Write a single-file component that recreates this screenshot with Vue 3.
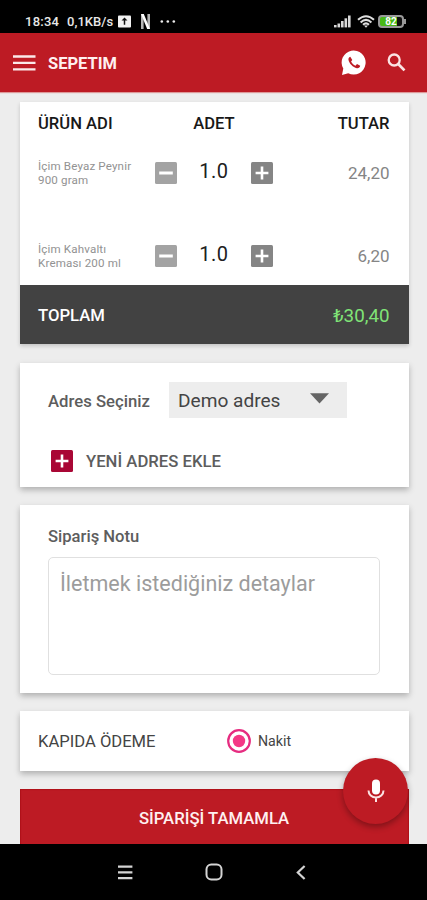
<template>
    <div class="screen">
        <header class="status-bar">
            <span class="clock">18:34</span>
            <span class="speed">0,1KB/s</span>
            <svg class="upload" width="13" height="13" viewBox="0 0 14 13">
                <rect width="14" height="13" rx="1" fill="#f2f2f2" />
                <path d="M7 2.2 3.8 5.4h2.4V10h1.6V5.4h2.4z" fill="#111" />
            </svg>
            <svg class="netflix" width="9" height="15" viewBox="0 0 9 15">
                <path d="M1.3 0v15M7.7 0v15" stroke="#b5b5b5" stroke-width="2.6" />
                <path d="M0 0h2.8L9 15H6.2z" fill="#fff" />
            </svg>
            <svg class="more" width="16" height="3" viewBox="0 0 16 3" fill="#eee">
                <circle cx="1.8" cy="1.5" r="1.3" />
                <circle cx="7.8" cy="1.5" r="1.3" />
                <circle cx="13.8" cy="1.5" r="1.3" />
            </svg>
            <div class="status-right">
                <svg width="17" height="13" viewBox="0 0 17 13" fill="#d8d8d8">
                    <rect x="0" y="10" width="2.6" height="2.4" />
                    <rect x="3.5" y="8.5" width="2.6" height="3.9" />
                    <rect x="7" y="6" width="2.6" height="6.4" />
                    <rect x="10.5" y="3.3" width="2.6" height="9.1" />
                    <rect x="14" y="0.5" width="2.6" height="11.9" />
                </svg>
                <svg width="18" height="13" viewBox="0 0 18 13" fill="none" stroke="#dedede" stroke-width="2">
                    <path d="M1 4.8Q9-2.4 17 4.8" />
                    <path d="M3.6 7.4Q9 2.4 14.4 7.4" />
                    <path d="M6 9.7Q9 7 12 9.7" />
                    <path d="M7 10.6h4L9 12.8z" fill="#dedede" stroke="none" />
                </svg>
                <div class="battery"><span>82</span></div>
            </div>
        </header>

        <nav class="app-bar">
            <svg width="23" height="16" viewBox="0 0 23 16" stroke="#fbe9e9" stroke-width="2.3">
                <path d="M0 1.5h22.5M0 7.9h22.5M0 14.3h22.5" />
            </svg>
            <h1>SEPETIM</h1>
            <svg class="whatsapp" width="26" height="26" viewBox="0 0 26 26">
                <path d="M1 25 2.3 18.6A12 12 0 1 1 7.2 23.2z" fill="#fff" />
                <path d="M9.3 6.7c-1.5.5-2.1 1.8-1.8 3.3.6 3.4 4.6 7.4 8.3 8.2 1.7.3 3.2-.7 3.4-2.4l-3.2-1.7-1.5 1.6c-2-.7-3.6-2.3-4.4-4.2l1.2-1.5z" fill="#bd1b24" />
            </svg>
            <svg class="search" width="19" height="19" viewBox="0 0 19 19" fill="none" stroke="#fbe3e3">
                <circle cx="7.2" cy="7" r="5.5" stroke-width="2.3" />
                <path d="m11.2 11 6.3 6.4" stroke-width="2.7" />
            </svg>
        </nav>

        <main class="content">
            <section class="card cart">
                <div class="row head">
                    <span>ÜRÜN ADI</span>
                    <span class="head-qty">ADET</span>
                    <span class="right">TUTAR</span>
                </div>
                <div v-for="item in items" :key="item.name" class="row item">
                    <div class="name">{{ item.name }}<br>{{ item.detail }}</div>
                    <div class="stepper">
                        <svg width="22" height="22" viewBox="0 0 22 22">
                            <rect width="22" height="22" rx="1.5" fill="#a3a3a3" />
                            <path d="M4.2 11h13.6" stroke="#fff" stroke-width="3" />
                        </svg>
                        <span>{{ item.qty }}</span>
                        <svg width="22" height="22" viewBox="0 0 22 22">
                            <rect width="22" height="22" rx="1.5" fill="#858585" />
                            <path d="M4.6 11h12.8M11 4.6v12.8" stroke="#fff" stroke-width="2.6" />
                        </svg>
                    </div>
                    <span class="price right">{{ item.price }}</span>
                </div>
                <div class="total">
                    <span>TOPLAM</span>
                    <span class="amount">₺30,40</span>
                </div>
            </section>

            <section class="card address">
                <div class="address-row">
                    <label>Adres Seçiniz</label>
                    <div class="select">
                        <span>Demo adres</span>
                        <svg width="19" height="11" viewBox="0 0 19 11"><path d="M0 .3h19L9.5 10.5z" fill="#656565" /></svg>
                    </div>
                </div>
                <div class="new-address">
                    <svg width="22" height="22" viewBox="0 0 22 22">
                        <rect width="22" height="22" rx="1.5" fill="#a90735" />
                        <path d="M4.6 11h12.8M11 4.6v12.8" stroke="#fff" stroke-width="2.6" />
                    </svg>
                    <span>YENİ ADRES EKLE</span>
                </div>
            </section>

            <section class="card note">
                <label>Sipariş Notu</label>
                <textarea v-model="note" placeholder="İletmek istediğiniz detaylar"></textarea>
            </section>

            <section class="card payment">
                <span class="pay-title">KAPIDA ÖDEME</span>
                <svg width="24" height="24" viewBox="0 0 24 24">
                    <circle cx="12" cy="12" r="10.8" fill="none" stroke="#e62c80" stroke-width="2.2" />
                    <circle cx="12" cy="12" r="6.2" fill="#f43886" />
                </svg>
                <span class="pay-option">Nakit</span>
            </section>

            <button class="submit">SİPARİŞİ TAMAMLA</button>
        </main>

        <button class="mic">
            <svg width="18" height="24" viewBox="0 0 18 24">
                <rect x="5" y="0.5" width="8" height="15" rx="4" fill="#fff" />
                <path d="M1.5 11.5a7.5 7 0 0 0 15 0M9 18.5V23" fill="none" stroke="#fbe3e3" stroke-width="2" />
            </svg>
        </button>

        <footer class="nav-bar">
            <svg width="15" height="15" viewBox="0 0 15 15" stroke="#d4d4d4" stroke-width="2.2">
                <path d="M0 1.6h14.4M0 7.4h14.4M0 13.2h14.4" />
            </svg>
            <svg width="18" height="18" viewBox="0 0 18 18" fill="none" stroke="#d4d4d4" stroke-width="2">
                <rect x="1.5" y="1.5" width="15" height="15" rx="4.8" />
            </svg>
            <svg width="10" height="15" viewBox="0 0 10 15" fill="none" stroke="#d4d4d4" stroke-width="2.2">
                <path d="M8.6 1 1.8 7.5l6.8 6.5" />
            </svg>
        </footer>
    </div>
</template>

<script setup>
import { ref } from 'vue'

const note = ref('')

const items = ref([
    { name: 'İçim Beyaz Peynir', detail: '900 gram', qty: '1.0', price: '24,20' },
    { name: 'İçim Kahvaltı', detail: 'Kreması 200 ml', qty: '1.0', price: '6,20' }
])
</script>

<style>
body {
    margin: 0;
    background: #000;
}
</style>

<style scoped>
.screen {
    position: relative;
    display: flex;
    flex-direction: column;
    width: 427px;
    height: 900px;
    overflow: hidden;
    background: #ededed;
    font-family: Roboto, "Liberation Sans", sans-serif;
    white-space: nowrap;
}

.screen * {
    box-sizing: border-box;
}

svg {
    display: block;
    flex: none;
}

.status-bar {
    display: flex;
    align-items: center;
    flex: none;
    height: 33px;
    padding: 9px 20px 0 25px;
    background: #000;
    color: #e8e8e8;
    font-size: 13px;
    font-weight: 500;
}

.clock {
    width: 42px;
    letter-spacing: 0.25px;
}

.speed {
    width: 51px;
    letter-spacing: 0.05px;
}

.netflix {
    margin-left: 10px;
}

.more {
    margin-left: 10px;
}

.status-right {
    display: flex;
    align-items: center;
    gap: 6px;
    margin-left: auto;
    padding-right: 3px;
}

.battery {
    position: relative;
    display: flex;
    align-items: center;
    justify-content: center;
    width: 26px;
    height: 13px;
    margin-left: -3px;
    border: 2px solid #999;
    border-radius: 4px;
    background: linear-gradient(90deg, #48b817 75%, #111 75%);
    color: #fff;
    font-size: 10px;
    font-weight: 700;
}

.battery::after {
    content: "";
    position: absolute;
    top: 2px;
    right: -4px;
    width: 2px;
    height: 5px;
    background: #999;
}

.app-bar {
    display: flex;
    align-items: center;
    flex: none;
    height: 59px;
    padding: 1px 21px 0 13px;
    background: #bd1b24;
    box-shadow: 0 1px 1px #d99;
}

.app-bar h1 {
    margin: 0 auto 0 12px;
    color: #fff0f0;
    font-size: 16.5px;
    font-weight: 700;
}

.search {
    margin: 0 0 2px 20px;
}

.content {
    display: flex;
    flex-direction: column;
    flex: 1;
    gap: 18px;
    min-height: 0;
    padding: 10px 18.5px 0 19.5px;
}

.card {
    flex: none;
    background: #fff;
    box-shadow: 0 3px 6px rgba(0, 0, 0, 0.26);
}

.cart {
    height: 242px;
    margin-bottom: 1px;
    box-shadow: 0 2px 4px rgba(0, 0, 0, 0.18);
}

.row {
    display: grid;
    grid-template-columns: 117px 118px 1fr;
    padding: 0 19px 0 18.5px;
}

.right {
    text-align: right;
}

.head {
    height: 54px;
    padding-top: 11px;
    color: #181818;
    font-size: 16.6px;
    font-weight: 500;
    line-height: 22px;
}

.head-qty {
    text-align: center;
}

.item {
    height: 83px;
    padding-top: 4px;
}

.item:nth-child(3) {
    height: 46px;
}

.name {
    margin-top: -1px;
    color: #929292;
    font-size: 11.6px;
    line-height: 14px;
    letter-spacing: 0.15px;
}

.stepper {
    display: flex;
    justify-content: space-between;
    height: 22px;
    margin-top: 2px;
}

.stepper span {
    color: #202020;
    font-size: 20px;
    line-height: 19px;
    letter-spacing: 0.5px;
}

.price {
    padding-top: 3px;
    color: #858585;
    font-size: 17px;
    line-height: 20px;
}

.total {
    display: flex;
    align-items: center;
    justify-content: space-between;
    height: 59px;
    padding: 2px 19px 0 18.5px;
    background: #424242;
    color: #fff;
    font-size: 16.7px;
    font-weight: 500;
}

.amount {
    color: #80e477;
    font-size: 18.8px;
    font-weight: 400;
}

.address {
    height: 124px;
    padding: 18px 28.5px;
}

.address-row {
    display: flex;
    align-items: center;
    height: 37px;
}

.address label,
.note label {
    color: #5d5d5d;
    font-size: 16.6px;
    font-weight: 500;
}

.address label {
    width: 121px;
    padding-top: 3px;
    font-size: 16.7px;
}

.select {
    display: flex;
    align-items: center;
    justify-content: space-between;
    width: 178px;
    height: 36px;
    padding: 2px 18px 0 9px;
    background: #ededed;
    color: #444;
    font-size: 19.1px;
}

.select svg {
    margin-bottom: 5px;
}

.new-address {
    display: flex;
    align-items: center;
    gap: 13px;
    margin-top: 32px;
    padding-left: 3px;
    color: #5d5d5d;
    font-size: 16.7px;
    font-weight: 500;
}

.note {
    height: 188px;
    padding: 22px 28.5px 0;
}

.note label {
    display: block;
    line-height: 20px;
}

textarea {
    display: block;
    width: 332px;
    height: 118px;
    margin-top: 10px;
    padding: 12px 11px;
    border: 1px solid #e0e0e0;
    border-radius: 5px;
    outline: none;
    background: #fff;
    font-family: inherit;
    font-size: 21.5px;
    line-height: 28px;
    resize: none;
}

textarea::placeholder {
    color: #9c9c9c;
}

.payment {
    display: flex;
    align-items: center;
    height: 60px;
    padding-left: 18.5px;
}

.pay-title {
    width: 189px;
    color: #444;
    font-size: 16.6px;
}

.pay-option {
    margin-left: 7px;
    color: #444;
    font-size: 14.2px;
}

.submit {
    flex: none;
    height: 60px;
    padding: 0 0 2px;
    border: 0;
    background: #bd1b24;
    box-shadow: inset 0 0 1px 1px #ae1119;
    color: #fff0f0;
    font-family: inherit;
    font-size: 16.7px;
    font-weight: 500;
}

.mic {
    position: absolute;
    top: 758px;
    left: 343px;
    display: flex;
    align-items: center;
    justify-content: center;
    width: 65px;
    height: 66px;
    padding: 0;
    border: 0;
    border-radius: 50%;
    background: #bd1b24;
    box-shadow: 0 3px 6px rgba(0, 0, 0, 0.32);
}

.nav-bar {
    position: relative;
    display: flex;
    align-items: center;
    flex: none;
    height: 56px;
    padding-left: 118px;
    background: #000;
}

.nav-bar svg + svg {
    margin-left: 72px;
}

.nav-bar svg:last-child {
    margin-left: 73px;
}
</style>
